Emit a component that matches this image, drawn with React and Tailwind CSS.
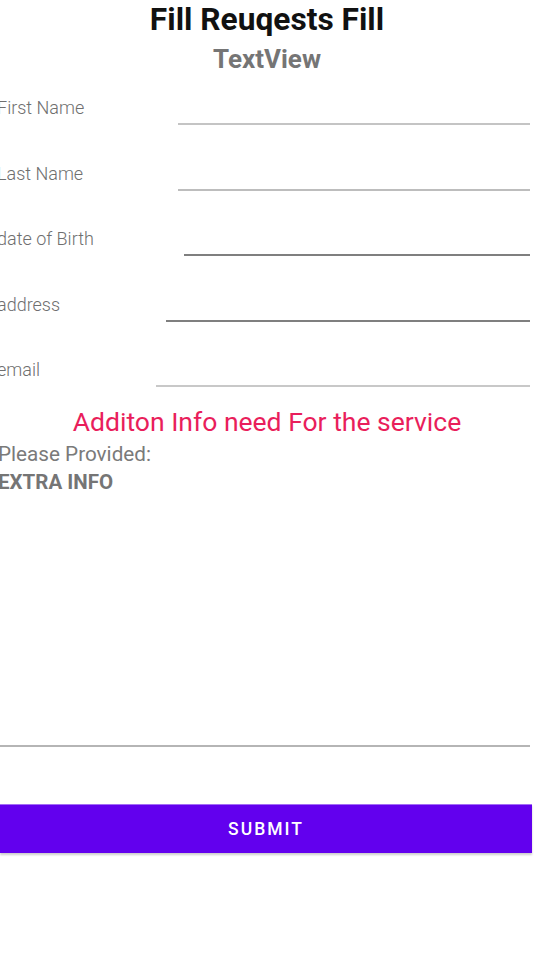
import React from "react";

const rows = [
  { label: "First Name", lw: "w-[178px]", line: "bg-[#c4c4c4]" },
  { label: "Last Name", lw: "w-[178px]", line: "bg-[#bdbdbd]" },
  { label: "date of Birth", lw: "w-[184px]", line: "bg-[#7f7f7f]" },
  { label: "address", lw: "w-[166px]", line: "bg-[#7f7f7f]" },
  { label: "email", lw: "w-[156px]", line: "bg-[#c8c8c8]" },
];

export default function App() {
  return (
    <div className="w-[534px] h-[954px] bg-white overflow-hidden font-['Roboto',sans-serif]">
      <div className="text-center text-[31.7px] leading-[40px] font-bold text-[#111111]">
        Fill Reuqests Fill
      </div>
      <div className="mt-[4px] text-center text-[26px] leading-[30px] font-bold text-[#757575]">
        TextView
      </div>
      <div className="flex flex-col">
        {rows.map((r, i) => (
          <div key={i} className="flex items-start h-[65.5px]">
            <div className={`${r.lw} shrink-0 mt-[23px] text-[18px] leading-[22px] font-light text-[#6f6f6f]`}>
              <span className="ml-[-3px] whitespace-nowrap">{r.label}</span>
            </div>
            <div className={`flex-1 mr-[4px] mt-[49px] h-[2px] ${r.line}`} />
          </div>
        ))}
      </div>
      <div className="mt-[5px] text-center text-[26.5px] leading-[30px] text-[#e91e5b]">
        Additon Info need For the service
      </div>
      <div className="mt-[5.5px] text-[20.7px] leading-[24px] text-[#7a7a7a] ml-[-2px]">
        Please Provided:
      </div>
      <div className="mt-[4px] text-[20.5px] leading-[24px] font-bold text-[#757575] ml-[-2px]">
        EXTRA INFO
      </div>
      <div className="mt-[251px] mr-[4px] h-[2px] bg-[#b5b5b5]" />
      <div className="mt-[57px] mr-[2px] h-[49px] bg-[#6200ee] border-t border-[#a36cf5] shadow-[0_2px_2px_rgba(0,0,0,0.2)] flex items-center justify-center">
        <span className="text-white text-[17.5px] font-medium tracking-[2px]">SUBMIT</span>
      </div>
    </div>
  );
}
